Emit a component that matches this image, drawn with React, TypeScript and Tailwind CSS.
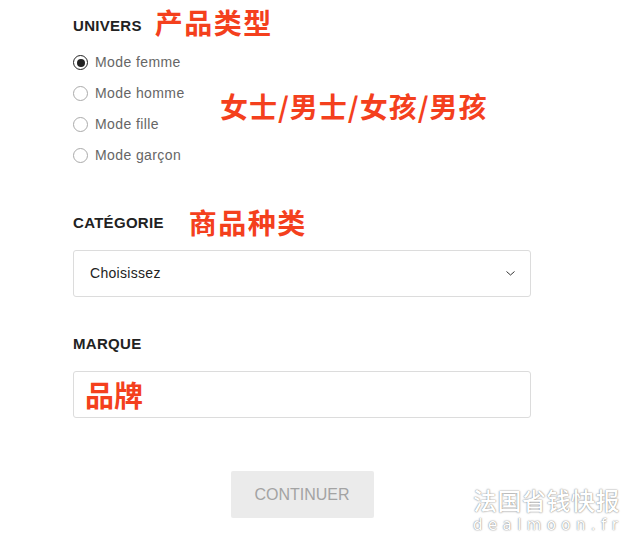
import React, { useState } from 'react';

const options = ['Mode femme', 'Mode homme', 'Mode fille', 'Mode garçon'];

const cjk = { fontFamily: '"Noto Sans CJK SC", sans-serif' };
const latin = { fontFamily: '"Liberation Sans", Arial, sans-serif' };

function Label({ children, note, noteClass }: { children: React.ReactNode; note?: string; noteClass?: string }) {
  return (
    <div className="flex h-[32px] items-center">
      <span className="text-[15px] font-bold leading-none tracking-[0.3px] text-[#222]">{children}</span>
      {note && (
        <span style={cjk} className={`text-[28px] font-bold leading-none text-[#f4401d] ${noteClass ?? ''}`}>
          {note}
        </span>
      )}
    </div>
  );
}

export default function App() {
  const [univers, setUnivers] = useState('Mode femme');

  return (
    <div style={latin} className="relative h-[543px] w-[622px] overflow-hidden bg-white">
      <div className="ml-[73px] w-[458px] pt-[9px]">
        {/* Univers */}
        <Label note="产品类型" noteClass="ml-[13px] -mt-[6px] tracking-[1.5px]">UNIVERS</Label>
        <div className="relative mt-[6px]">
          {options.map(o => (
            <label key={o} className="flex h-[31px] cursor-pointer items-center" onClick={() => setUnivers(o)}>
              <span
                className={`flex h-[15px] w-[15px] items-center justify-center rounded-full border bg-white ${
                  univers === o ? 'border-[#222] border-[1.5px]' : 'border-[#aaa]'
                }`}
              >
                {univers === o && <span className="h-[8px] w-[8px] rounded-full bg-[#222]" />}
              </span>
              <span className="ml-[7px] text-[14px] tracking-[0.4px] text-[#666]">{o}</span>
            </label>
          ))}
          <span
            style={cjk}
            className="absolute left-[147px] top-[45px] text-[28px] font-bold leading-none tracking-[1px] text-[#f4401d]"
          >
            女士/男士/女孩/男孩
          </span>
        </div>

        {/* Categorie */}
        <div className="mt-[35px]">
          <Label note="商品种类" noteClass="ml-[25px] tracking-[1.5px]">CATÉGORIE</Label>
        </div>
        <div className="mt-[12px] flex h-[47px] items-center justify-between rounded-[3px] border border-[#dcdcdc] pl-[16px] pr-[15px]">
          <span className="text-[14px] tracking-[0.3px] text-[#222]">Choisissez</span>
          <svg width="9" height="5" viewBox="0 0 9 5" fill="none">
            <path d="M0.5 0.5L4.5 4L8.5 0.5" stroke="#333" strokeWidth="1" />
          </svg>
        </div>

        {/* Marque */}
        <div className="mt-[30px]">
          <Label>MARQUE</Label>
        </div>
        <div className="mt-[12px] flex h-[47px] items-center rounded-[3px] border border-[#dcdcdc] pl-[11px]">
          <span style={cjk} className="text-[29px] font-bold leading-none text-[#f4401d]">
            品牌
          </span>
        </div>

        <div className="mt-[53px] flex justify-center">
          <button className="h-[47px] w-[143px] rounded-[2px] bg-[#ebebeb] text-[16px] text-[#a3a3a3]">
            CONTINUER
          </button>
        </div>
      </div>

      {/* watermark */}
      <div
        className="absolute left-[473px] top-[488px] flex flex-col items-start text-white"
        style={{ textShadow: '0 0 2px rgba(0,0,0,0.4), 0 0 1px rgba(0,0,0,0.35)' }}
      >
        <span style={cjk} className="text-[24px] font-medium leading-none tracking-[0.5px]">
          法国省钱快报
        </span>
        <span className="mt-[6px] whitespace-nowrap text-[15px] leading-none" style={{ fontFamily: '"DejaVu Sans", sans-serif' }}>
          <span className="tracking-[5.4px]">dealmoon.f</span>r
        </span>
      </div>
    </div>
  );
}
